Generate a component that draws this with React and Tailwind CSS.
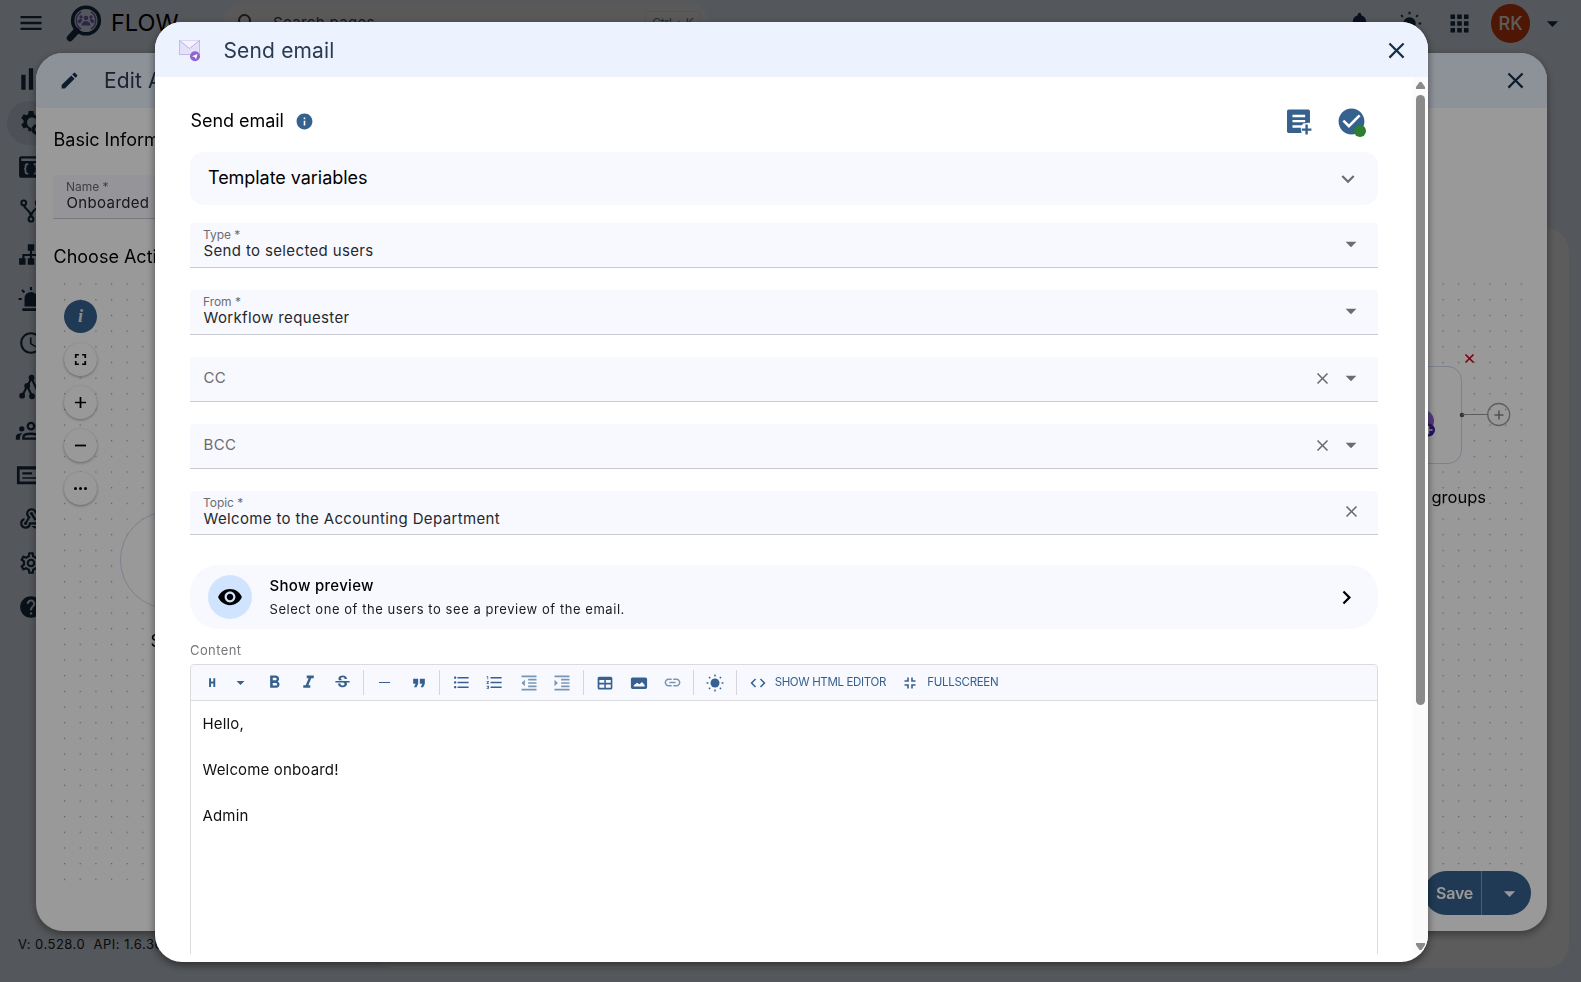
import {
    MdAccessTime,
    MdApps,
    MdArrowDropDown,
    MdCheckCircle,
    MdChevronRight,
    MdClose,
    MdCode,
    MdEdit,
    MdExpandMore,
    MdFormatBold,
    MdFormatIndentDecrease,
    MdFormatIndentIncrease,
    MdFormatItalic,
    MdFormatListBulleted,
    MdFormatListNumbered,
    MdFormatQuote,
    MdHelp,
    MdInfo,
    MdLink,
    MdMenu,
    MdNotifications,
    MdOutlineSettings,
    MdSearch,
    MdStrikethroughS,
    MdVisibility,
    MdWebhook,
} from "react-icons/md";

/* ---------- Icons the icon set lacks ---------- */

const Svg = ({ size = 26, className, children }) => (
    <svg width={size} height={size} viewBox="0 0 24 24" fill="currentColor" className={className}>
        {children}
    </svg>
);

const PollIcon = () => (
    <Svg>
        <path d="M3 22V8h4v14H3zM10 22V2h4v20h-4zM17 22v-8h4v8h-4z" />
    </Svg>
);

const CogServiceIcon = () => (
    <Svg>
        <path
            fillRule="evenodd"
            d="M19 9.6c0-.4.2-.5 2-1.9l-2-3.7-2.6 1c-.5-.4-1-.7-1.6-1L14.300 1h-4.500l-.4 3c-.6.2-1.100.5-1.600.9L5.200 4 3 7.700l2.100 1.700v2.300L3 13.400l2.200 3.700 2.500-1c.5.4 1 .7 1.600.9l.4 2.700h3l.3-3.200c-2.700-.2-4.600-2.200-4.600-5 0-2.700 2-4.600 4.500-4.600s4.200 1.500 4.600 3.700H19zM17.500 13a5 5 0 1 0 0 10 5 5 0 0 0 0-10zm0 3a2 2 0 1 1 0 4 2 2 0 0 1 0-4z"
        />
    </Svg>
);

const BracesIcon = () => (
    <Svg>
        <path
            fillRule="evenodd"
            d="M3 2h18a2 2 0 0 1 2 2v16a2 2 0 0 1-2 2H3a2 2 0 0 1-2-2V4c0-1.100.9-2 2-2zm0 2.200v2.300h18V4.200H3z"
        />
        <path
            d="M9.500 9.500H8.300c-.8 0-1.300.5-1.300 1.300v1.600c0 .8-.5 1.400-1.300 1.400.8 0 1.300.6 1.300 1.400v1.600c0 .8.5 1.300 1.300 1.300h1.200M14.500 9.500h1.200c.8 0 1.300.5 1.300 1.300v1.600c0 .8.5 1.400 1.300 1.400-.8 0-1.300.6-1.300 1.400v1.600c0 .8-.5 1.300-1.300 1.300h-1.200"
            fill="none"
            stroke="#ecf3fd"
            strokeWidth="1.700"
        />
    </Svg>
);

const BranchIcon = () => (
    <Svg>
        <g fill="none" stroke="currentColor" strokeWidth="1.900">
            <circle cx="5.300" cy="4.500" r="2.200" />
            <circle cx="18.700" cy="4.500" r="2.200" />
            <circle cx="12" cy="19.500" r="2.200" />
            <path d="M5.500 6.700c.6 4 6.500 4.500 6.500 10.500 0-6 6-6.500 6.500-10.500" />
        </g>
    </Svg>
);

const SitemapIcon = () => (
    <Svg>
        <path d="M9 2h6v6h-2v3h7v4h3v6h-6v-6h1v-2h-5v2h2v6H9v-6h2v-2H6v2h1v6H1v-6h3v-4h7V8H9V2z" />
    </Svg>
);

const SirenIcon = () => (
    <Svg>
        <path d="M12 5.500a6 6 0 0 0-6 6V19h12v-7.500a6 6 0 0 0-6-6zM4 20.500h16V23H4v-2.500zM11 1h2v3h-2V1zM4.300 2.900 6.600 5.100 5.300 6.600 3 4.300l1.300-1.400zM.5 11h3v2h-3v-2z" />
    </Svg>
);

const GraphIcon = () => (
    <Svg>
        <g fill="none" stroke="currentColor" strokeWidth="2">
            <path d="M12.500 4 8.500 11 4 20M8.500 11 13 20.500M13 5l7 15" />
        </g>
        <circle cx="12.500" cy="3.500" r="2.700" />
        <circle cx="8.500" cy="11" r="2.700" />
        <circle cx="3.800" cy="20" r="2.700" />
        <circle cx="13" cy="20.500" r="2.700" />
        <circle cx="20.500" cy="20" r="2.700" />
    </Svg>
);

const GroupIcon = () => (
    <Svg className="overflow-visible">
        <path d="M-2 20v-2.500c0-2.500 3.500-3.500 6-3.300C2 15.500 1.700 17 1.700 20H-2z" />
        <circle cx="3.500" cy="10" r="2.500" />
        <g fill="none" stroke="currentColor" strokeWidth="2.200">
            <circle cx="12" cy="7.500" r="3" />
            <path d="M5 19v-1.500c0-4 14-4 14 0V19H5z" />
        </g>
    </Svg>
);

const CardIcon = () => (
    <Svg className="overflow-visible">
        <path
            fillRule="evenodd"
            d="M-1 4h26v16.500H-1V4zM1.500 7v11h21V7h-21zM4 9.500h9v2H4v-2zM4 14h15v1.500H4V14z"
        />
    </Svg>
);

const SunIcon = ({ size = 24 }) => (
    <Svg size={size}>
        <circle cx="12" cy="12" r="6" />
        <g stroke="currentColor" strokeWidth="1.900">
            <path d="M12 .8v2.400M12 20.800v2.400M.8 12h2.400M20.800 12h2.400M4 4l1.600 1.600M18.400 18.400 20 20M4 20l1.600-1.600M18.400 5.600 20 4" />
        </g>
    </Svg>
);

const HeadingIcon = () => (
    <Svg size={20}>
        <path d="M8.500 6.300h2.300v3.900h2.800V6.300h2.300v10.400h-2.300v-4.100h-2.800v4.100H8.500V6.300z" />
    </Svg>
);

const TableIcon = () => (
    <Svg size={18}>
        <path
            fillRule="evenodd"
            d="M4.500 3.500h15a2.300 2.300 0 0 1 2.300 2.300v12.700a2.300 2.300 0 0 1-2.300 2.300h-15a2.300 2.300 0 0 1-2.300-2.300V5.800c0-1.300 1-2.300 2.300-2.300zm0 4.500v3.500h6.600V8H4.500zm8.600 0v3.500h6.600V8h-6.600zm-8.600 6v4.300h6.600V14H4.500zm8.600 0v4.300h6.600V14h-6.600z"
        />
    </Svg>
);

const ImageIcon = () => (
    <Svg size={18}>
        <path
            fillRule="evenodd"
            d="M3.500 4.500h17a2.300 2.300 0 0 1 2.300 2.300v11a2.300 2.300 0 0 1-2.300 2.300h-17a2.300 2.300 0 0 1-2.300-2.300v-11c0-1.300 1-2.300 2.300-2.300zM5 16.500h14.500v-2L16 10.500l-3.500 3-3-2L5 15v1.500z"
        />
    </Svg>
);

// Four corners pointing inwards
const CollapseIcon = () => (
    <svg width="12" height="12" viewBox="0 0 12 12" fill="none" stroke="currentColor" strokeWidth="1.600">
        <path d="M4 .5V4H.5M8 .5V4h3.500M4 11.500V8H.5M8 11.500V8h3.500" />
    </svg>
);

const PostAddIcon = () => (
    <Svg size={29}>
        <path
            fillRule="evenodd"
            d="M4 2h16c.8 0 1.500.7 1.500 1.500v9.700c-1.200-.3-2.500-.2-3.500.3h-1.700c-.6.5-1.200 1-1.600 1.700H7v1.900h7c-.1.6-.1 1.200 0 1.900l.6 2.500H4c-.8 0-1.500-.7-1.500-1.500V3.500C2.500 2.700 3.200 2 4 2zm3 4.500v1.900h10.500V6.500H7zm0 4.200v1.900h10.500v-1.900H7z"
        />
        <path d="M17.700 14.500h2v3.200h3v2h-3v3.100h-2v-3.100h-3v-2h3v-3.200z" />
    </Svg>
);

const EnvelopeIcon = () => (
    <svg width="24" height="24" viewBox="0 0 24 24">
        <rect x="1.500" y="2.500" width="20" height="14" fill="#e6e1fa" stroke="#c3bce6" />
        <path d="M1.500 2.500l10 8 10-8" fill="#f5f2ff" stroke="#b9b2e0" />
        <circle cx="17" cy="18.300" r="5" fill="#8f63d2" />
        <path d="M14 18.300l5.500-2.400-1.400 5.300-1.500-2.200z" fill="#fff" />
    </svg>
);

const LogoIcon = () => (
    <svg width="38" height="38" viewBox="0 0 38 38">
        <circle cx="21" cy="16.500" r="13.300" fill="none" stroke="#183049" strokeWidth="3.600" />
        <path d="M11.500 27 5 34" stroke="#183049" strokeWidth="6.500" strokeLinecap="round" />
        <g fill="#7a6cc4">
            <circle cx="21" cy="14" r="2.300" />
            <circle cx="16" cy="13" r="1.700" />
            <circle cx="26" cy="13" r="1.700" />
            <path d="M16.500 21.500c0-6 9-6 9 0zM12.500 18c0-3 4-4 5-2l-2.500 3.500zM29.500 18c0-3-4-4-5-2l2.500 3.500z" />
        </g>
        <g fill="none" stroke="#7a6cc4" strokeWidth="1.500">
            <path d="M16 8a10 10 0 0 0 0 17M26 8a10 10 0 0 1 0 17" />
        </g>
    </svg>
);

/* ---------- Page behind the dialogs ---------- */

const NAV_ITEMS = [
    { id: "stats", icon: <PollIcon /> },
    { id: "automation", icon: <CogServiceIcon />, active: true },
    { id: "code", icon: <BracesIcon /> },
    { id: "branch", icon: <BranchIcon /> },
    { id: "sitemap", icon: <SitemapIcon /> },
    { id: "alerts", icon: <SirenIcon /> },
    { id: "history", icon: <MdAccessTime size={26} /> },
    { id: "graph", icon: <GraphIcon /> },
    { id: "groups", icon: <GroupIcon /> },
    { id: "cards", icon: <CardIcon /> },
    { id: "webhooks", icon: <MdWebhook size={26} /> },
    { id: "settings", icon: <MdOutlineSettings size={26} /> },
    { id: "help", icon: <MdHelp size={26} /> },
];

function TopBar() {
    return (
        <header className="flex h-[46px] shrink-0 items-center pl-[17px] pr-[15px] text-[#183049]">
            <MdMenu size={28} />
            <div className="ml-[20px] flex items-center gap-[8px]">
                <LogoIcon />
                <span className="w-[112px] text-[23.500px] text-black">FLOW</span>
            </div>
            <div className="flex h-[44px] w-[485px] items-center rounded-full bg-[#fbf8f8] pr-[2px] pl-3 text-[#444]">
                <MdSearch size={24} />
                <span className="ml-[14px] text-[15px] tracking-[0.350px]">Search pages...</span>
                <span className="mr-[5px] ml-auto flex h-[24px] w-[56px] items-center justify-center rounded border border-[#eee8e8] text-[12px] tracking-[-0.2px] text-[#777]">
                    Ctrl + K
                </span>
            </div>
            <div className="ml-auto flex items-center">
                <MdNotifications size={27} className="mr-[24px]" />
                <span className="mr-[24px]">
                    <SunIcon size={25} />
                </span>
                <MdApps size={27} className="mr-[18px]" />
                <span className="flex size-[39px] items-center justify-center rounded-full bg-[#d93f0e] text-[18px] font-medium text-white">
                    RK
                </span>
                <MdArrowDropDown size={27} className="ml-[9px]" />
            </div>
        </header>
    );
}

function Sidebar() {
    return (
        <nav className="flex w-[370px] shrink-0 flex-col pt-[11px] pl-[7px] text-[#183049]">
            {NAV_ITEMS.map((item) => (
                <div
                    key={item.id}
                    className={`flex h-[44px] w-[49px] items-center justify-center pr-px ${item.active ? "rounded-full bg-[#d7e0ee]" : ""}`}
                >
                    {item.icon}
                </div>
            ))}
            <p className="mt-auto mb-[28px] pl-[11px] text-[13px] tracking-[0.5px] whitespace-pre text-[#222]">
                V: 0.528.0  API: 1.6.36
            </p>
        </nav>
    );
}

/* ---------- Shared pieces ---------- */

function DialogHeader({ icon, title, className }) {
    return (
        <div className={`flex h-[55px] shrink-0 items-center bg-[#ecf3ff] pr-[18px] ${className}`}>
            {icon}
            <h2 className="text-[21px] tracking-[0.150px] text-[#2b3a50]">{title}</h2>
            <MdClose size={27} className="ml-auto text-[#14304d]" />
        </div>
    );
}

function Field({ label, value, clearable, select, height = "h-[45px]" }) {
    return (
        <div className={`flex items-center rounded-t-[4px] border-b border-[#cacbd2] bg-[#f8f9ff] pr-[14px] pb-[2px] pl-[13px] text-[#6c6c70] ${height}`}>
            {value ? (
                <div className="flex flex-col pb-[2px]">
                    <span className="text-[12px] leading-[15px] tracking-[-0.050px]">{label}</span>
                    <span className="pl-[0.500px] text-[15px] leading-[17px] tracking-[0.360px] text-[#26282c]">{value}</span>
                </div>
            ) : (
                <span className="pl-[0.500px] text-[15px] leading-[20px] tracking-[0.4px]">{label}</span>
            )}
            <div className="ml-auto flex items-center gap-[3px]">
                {clearable && <MdClose size={19} className="mr-[3px]" />}
                {select && <MdArrowDropDown size={26} />}
            </div>
        </div>
    );
}

/* ---------- Edit action dialog ---------- */

const CANVAS_BUTTONS = [
    { id: "fit", path: "M6 10V6h4M14 6h4v4M18 14v4h-4M10 18H6v-4" },
    { id: "zoom-in", path: "M12 5v14M5 12h14" },
    { id: "zoom-out", path: "M5 12h14" },
];

function Canvas() {
    return (
        <div className="relative h-[610px] overflow-hidden">
            {/* Dotted grid */}
            <svg className="absolute inset-0 size-full">
                <defs>
                    <pattern id="dots" x="11" y="9.500" width="15.664" height="15.664" patternUnits="userSpaceOnUse">
                        <rect width="1.200" height="1.200" fill="#9a9a9a" />
                    </pattern>
                </defs>
                <rect x="6" y="6" width="1467" height="602" fill="url(#dots)" />
            </svg>

            {/* Nodes */}
            <div className="absolute top-[237px] left-[67px] size-[98px] rounded-full border border-[#cdd8f2] bg-white" />
            <span className="absolute top-[355px] left-[97.500px] text-[17px] text-black">Start</span>
            <div className="absolute top-[92px] left-[1311px] h-[98px] w-[98px] rounded-[14px] border border-[#cdd8f2] bg-white" />
            <span className="absolute top-[211px] right-[44px] text-[16.500px] text-black">Add to groups</span>
            <svg className="absolute top-[70px] left-[1340px]" width="140" height="100">
                <circle cx="30" cy="77" r="11" fill="#8f63d2" />
                <circle cx="35.500" cy="86" r="6.500" fill="#4420a8" />
                <path d="M31.500 86h8M35.500 82v8" stroke="#fff" strokeWidth="1.500" />
                <path d="M72.500 10.500l8 8M80.500 10.500l-8 8" stroke="#d0021b" strokeWidth="1.700" />
                <circle cx="69" cy="71" r="2.300" fill="#555" />
                <path d="M69.500 70.500h26" stroke="#999" />
                <circle cx="105.700" cy="70.500" r="11" fill="none" stroke="#a0a0a0" strokeWidth="1.300" />
                <path d="M101.500 71h9M106 66.500v9" stroke="#888" strokeWidth="1.500" />
            </svg>

            {/* View controls */}
            <div className="absolute top-[26px] left-[11px] flex flex-col gap-[10px]">
                <span className="flex size-[33px] items-center justify-center rounded-full bg-[#36618e] font-['Liberation_Serif'] text-[18px] font-bold text-[#e6e6e6] italic">
                    i
                </span>
                {CANVAS_BUTTONS.map((btn) => (
                    <span key={btn.id} className="flex size-[33px] items-center justify-center rounded-full bg-white shadow-[0_1px_3px_rgba(0,0,0,0.35)]">
                        <svg width="19" height="19" viewBox="0 0 24 24" fill="none" stroke="#000" strokeWidth="2.200">
                            <path d={btn.path} />
                        </svg>
                    </span>
                ))}
                <span className="flex size-[33px] items-center justify-center gap-[2px] rounded-full bg-white shadow-[0_1px_3px_rgba(0,0,0,0.35)]">
                    <i className="size-[3px] rounded-full bg-black" />
                    <i className="size-[3px] rounded-full bg-black" />
                    <i className="size-[3px] rounded-full bg-black" />
                </span>
            </div>
        </div>
    );
}

function EditActionDialog() {
    return (
        <section className="relative flex h-[878px] w-[1511px] flex-col overflow-hidden rounded-[27px] bg-white shadow-[0_3px_8px_rgba(0,0,0,0.4)]">
            <DialogHeader
                title="Edit Action"
                icon={<MdEdit size={21} className="mr-[24px] text-[#14304d]" />}
                className="pl-[23px]"
            />
            <div className="px-[17px] pt-[20px]">
                <h3 className="pl-[0.500px] text-[18px] leading-[24px] text-black">Basic Information</h3>
                <div className="mt-[23px] w-[720px]">
                    <Field label="Name *" value="Onboarded user" height="h-[44px]" />
                </div>
                <h3 className="mt-[26px] pl-[0.500px] text-[18px] leading-[24px] text-black">Choose Action</h3>
                <div className="mt-[5px]">
                    <Canvas />
                </div>
            </div>
            <div className="absolute right-[16px] bottom-[16px] flex h-[44px] w-[107px] overflow-hidden rounded-full bg-[#36618e] text-white">
                <span className="flex w-[58px] items-center justify-center border-r border-[#7d9bbb] pb-px pl-[4px] text-[16px] font-semibold tracking-[-0.2px]">Save</span>
                <span className="flex flex-1 items-center justify-center pl-[6px]">
                    <MdArrowDropDown size={27} />
                </span>
            </div>
        </section>
    );
}

/* ---------- Send email dialog ---------- */

function ToolButton({ children, muted }) {
    return (
        <button type="button" className={`flex w-[33.700px] shrink-0 items-center justify-center ${muted ? "opacity-65" : ""}`}>
            {children}
        </button>
    );
}

const Separator = () => <span className="mx-1 h-[25px] w-px shrink-0 bg-[#d3d6de]" />;

function Editor() {
    return (
        <div className="h-[340px] shrink-0 rounded-t-[4px] border border-[#dcdce0]">
            <div className="flex h-[36px] items-center rounded-t-[4px] border-b border-[#dcdce0] bg-[#f8f9ff] text-[#36618e]">
                <span className="flex w-[67px] items-center pl-[11px]">
                    <HeadingIcon />
                    <MdArrowDropDown size={19} className="ml-[9px]" />
                </span>
                <ToolButton><MdFormatBold size={21} /></ToolButton>
                <ToolButton><MdFormatItalic size={21} /></ToolButton>
                <ToolButton><MdStrikethroughS size={19} /></ToolButton>
                <Separator />
                <ToolButton><span className="h-[1.500px] w-[11px] bg-[#36618e]" /></ToolButton>
                <ToolButton><MdFormatQuote size={20} /></ToolButton>
                <Separator />
                <ToolButton><MdFormatListBulleted size={19} /></ToolButton>
                <ToolButton><MdFormatListNumbered size={19} /></ToolButton>
                <ToolButton muted><MdFormatIndentDecrease size={20} /></ToolButton>
                <ToolButton muted><MdFormatIndentIncrease size={20} /></ToolButton>
                <Separator />
                <ToolButton><TableIcon /></ToolButton>
                <ToolButton><ImageIcon /></ToolButton>
                <ToolButton muted><MdLink size={19} /></ToolButton>
                <Separator />
                <ToolButton><SunIcon size={18} /></ToolButton>
                <Separator />
                <ToolButton><MdCode size={18} /></ToolButton>
                <span className="w-[119px] text-[11.500px] tracking-[-0.350px] whitespace-nowrap">SHOW HTML EDITOR</span>
                <ToolButton><CollapseIcon /></ToolButton>
                <span className="text-[11.500px] tracking-[-0.300px]">FULLSCREEN</span>
            </div>
            <div className="space-y-[23px] px-[11.500px] pt-[11px] text-[15px] leading-[23px] tracking-[0.160px] text-[#111]">
                <p>Hello,</p>
                <p>Welcome onboard!</p>
                <p>Admin</p>
            </div>
        </div>
    );
}

function Scrollbar() {
    return (
        <div className="flex w-[15px] shrink-0 flex-col items-center bg-[#fbfbfb] pt-[5px] pb-[4px] text-[#8a8a8a]">
            <svg width="9" height="7" fill="currentColor">
                <path d="M3.500 0h2L9 5v2H0V5z" />
            </svg>
            <div className="mt-[6px] h-[610px] w-[9px] rounded-full bg-[#8a8a8a]" />
            <svg width="9" height="7" fill="currentColor" className="mt-auto">
                <path d="M3.500 7h2L9 2V0H0v2z" />
            </svg>
        </div>
    );
}

function SendEmailDialog() {
    return (
        <section className="flex h-[940px] w-[1273px] flex-col overflow-hidden rounded-[27px] bg-white pb-[8px] shadow-[0_3px_8px_rgba(0,0,0,0.5)]">
            <DialogHeader
                title="Send email"
                icon={<span className="mr-[21.500px] pb-[2px]"><EnvelopeIcon /></span>}
                className="pt-[2px] pl-[23px]"
            />
            <div className="flex min-h-0 flex-1">
                <div className="flex min-w-0 flex-1 flex-col overflow-hidden pr-[35px] pl-[35px]">
                    <div className="flex h-[75px] shrink-0 items-center pt-[13px] pr-[11px]">
                        <h3 className="pb-[2px] pl-[0.500px] text-[18px] tracking-[-0.050px] text-black">Send email</h3>
                        <MdInfo size={19} className="ml-[11px] text-[#36618e]" />
                        <div className="ml-auto flex items-center gap-[23px] text-[#36618e]">
                            <PostAddIcon />
                            <span className="relative">
                                <MdCheckCircle size={31} />
                                <i className="absolute right-[1px] bottom-0 size-[12px] rounded-full bg-[#2e7d32]" />
                            </span>
                        </div>
                    </div>

                    <div className="flex h-[53px] shrink-0 items-center rounded-[14px] bg-[#f8f9ff] pr-[17.500px] pl-[18px]">
                        <span className="pb-[2px] text-[18px] tracking-[-0.050px] text-black">Template variables</span>
                        <MdExpandMore size={26} className="ml-auto text-[#6c6c70]" />
                    </div>

                    <div className="mt-[18px] flex shrink-0 flex-col gap-[22px]">
                        <Field label="Type *" value="Send to selected users" select />
                        <Field label="From *" value="Workflow requester" select />
                        <Field label="CC" clearable select />
                        <Field label="BCC" clearable select />
                        <Field label="Topic *" value="Welcome to the Accounting Department" clearable height="h-[44px]" />
                    </div>

                    <div className="mt-[30px] flex h-[64px] shrink-0 items-center rounded-[28px] bg-[#f8f9ff] px-[18px]">
                        <span className="flex size-[44px] items-center justify-center rounded-full bg-[#d1e4ff] text-black">
                            <MdVisibility size={26} />
                        </span>
                        <div className="ml-[17.500px] flex flex-col pt-px">
                            <span className="text-[15px] leading-[24px] font-medium tracking-[0.300px] text-black">Show preview</span>
                            <span className="text-[13px] leading-[23px] tracking-[0.550px] text-[#1c1c1e]">
                                Select one of the users to see a preview of the email.
                            </span>
                        </div>
                        <MdChevronRight size={27} className="ml-auto text-black" />
                    </div>

                    <label className="mt-[12px] mb-[4px] shrink-0 text-[13px] leading-[19px] tracking-[0.4px] text-[#77777b]">Content</label>
                    <Editor />
                </div>
                <Scrollbar />
            </div>
        </section>
    );
}

export default function App() {
    return (
        <div className="h-[982px] w-[1581px] overflow-hidden font-['Inter',sans-serif]">
            <div className="flex h-full flex-col bg-[#ecf3fd]">
                <TopBar />
                <div className="flex flex-1">
                    <Sidebar />
                    <main className="mt-[182px] mr-[12px] mb-[14px] flex-1 rounded-[24px] bg-white" />
                </div>
            </div>

            <div className="fixed inset-0 z-10 bg-black/40 pt-[53px] pl-[36px]">
                <EditActionDialog />
            </div>
            <div className="fixed inset-0 z-20 bg-black/40 pt-[22px] pl-[155px]">
                <SendEmailDialog />
            </div>
        </div>
    );
}
